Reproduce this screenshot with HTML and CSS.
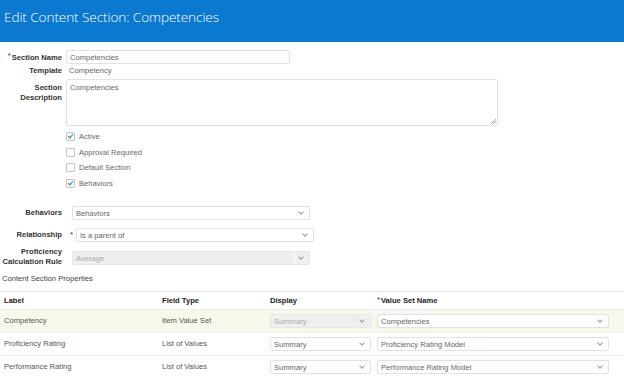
FILE: index.html
```html
<!DOCTYPE html>
<html lang="en">
<head>
  <meta charset="UTF-8">
  <title>Edit Content Section: Competencies</title>
  <link rel="stylesheet" href="styles.css">
</head>
<body>

<div class="header">
  <h1>Edit Content Section: Competencies</h1>
</div>

<!-- main form -->
<div class="form">
  <div class="lbl"><span class="req">*</span>Section Name</div>
  <div class="input name">Competencies</div>

  <div class="lbl tpl">Template</div>
  <div class="value">Competency</div>

  <div class="lbl desc">Section<br>Description</div>
  <div class="input area">Competencies<span class="grip"></span></div>

  <div></div>
  <div class="checks">
    <label class="check"><span class="box on"></span>Active</label>
    <label class="check"><span class="box"></span>Approval Required</label>
    <label class="check"><span class="box"></span>Default Section</label>
    <label class="check"><span class="box on"></span>Behaviors</label>
  </div>
</div>

<div class="form2">
  <div class="lbl">Behaviors</div>
  <div class="select wide">Behaviors<span class="arrow"></span></div>

  <div class="lbl">Relationship</div>
  <div class="reqrow"><span class="req dot">*</span><div class="select wide">Is a parent of<span class="arrow"></span></div></div>

  <div class="lbl two">Proficiency<br>Calculation Rule</div>
  <div class="select wide disabled">Average<span class="arrow"></span></div>
</div>

<div class="caption">Content Section Properties</div>

<table class="props">
  <thead>
    <tr>
      <th class="c1">Label</th>
      <th class="c2">Field Type</th>
      <th class="c3">Display</th>
      <th class="c4"><span class="req">*</span>Value Set Name</th>
    </tr>
  </thead>
  <tbody>
    <tr class="sel">
      <td>Competency</td>
      <td>Item Value Set</td>
      <td><div class="select disabled">Summary<span class="arrow"></span></div></td>
      <td><div class="select long">Competencies<span class="arrow"></span></div></td>
    </tr>
    <tr>
      <td>Proficiency Rating</td>
      <td>List of Values</td>
      <td><div class="select">Summary<span class="arrow"></span></div></td>
      <td><div class="select long">Proficiency Rating Model<span class="arrow"></span></div></td>
    </tr>
    <tr>
      <td>Performance Rating</td>
      <td>List of Values</td>
      <td><div class="select">Summary<span class="arrow"></span></div></td>
      <td><div class="select long">Performance Rating Model<span class="arrow"></span></div></td>
    </tr>
  </tbody>
</table>

</body>
</html>
```

FILE: styles.css
```css
body {
  margin: 0;
  font-family: "Liberation Sans", Arial, sans-serif;
  font-size: 7.6px;
  color: #333;
  background: #fff;
}
.header {
  background: #0b79d0;
  height: 42px;
  padding: 8px 4px 0;
  box-sizing: border-box;
}
.header h1 {
  margin: 0;
  font-family: "Open Sans", "Liberation Sans", sans-serif;
  font-weight: 300;
  font-size: 13.6px;
  color: #fff;
  line-height: 18px;
  letter-spacing: -0.1px;
}
.req {
  color: #0b79d0;
  font-weight: bold;
  position: relative;
  top: -2px;
  margin-right: 1px;
}
.lbl {
  font-weight: bold;
  text-align: right;
  color: #333;
  line-height: 9px;
}

/* top form */
.form {
  display: grid;
  grid-template-columns: 62px 1fr;
  column-gap: 4px;
  margin-top: 8px;
  align-items: start;
}
.form .lbl {
  padding-top: 3px;
}
.form .lbl.tpl {
  margin-top: 1px;
  padding-top: 1px;
}
.form .lbl.desc {
  margin-top: 4px;
  padding-top: 4px;
  line-height: 9.5px;
}
.input {
  border: 1px solid #e2e2e2;
  border-radius: 2px;
  color: #666;
  padding: 2px 3px;
  line-height: 9px;
  box-sizing: border-box;
}
.input.name {
  width: 224px;
  height: 14px;
}
.value {
  color: #666;
  margin-top: 1px;
  padding: 1px 3px 0;
  line-height: 9px;
}
.input.area {
  width: 432px;
  height: 47px;
  margin-top: 4px;
  position: relative;
  padding-top: 3px;
}
.grip {
  position: absolute;
  right: 1px;
  bottom: 1px;
  width: 5px;
  height: 5px;
  background: linear-gradient(135deg, transparent 45%, #aaa 45%, #aaa 55%, transparent 55%, transparent 70%, #aaa 70%, #aaa 80%, transparent 80%);
}
.checks {
  display: flex;
  flex-direction: column;
  gap: 6.5px;
  margin-top: 6px;
}
.check {
  display: flex;
  align-items: center;
  color: #666;
  line-height: 9px;
  gap: 4px;
}
.box {
  width: 7px;
  height: 7px;
  border: 1px solid #c4c4c4;
  border-radius: 1px;
  position: relative;
  background: #fff;
}
.box.on::after {
  content: "";
  position: absolute;
  left: 2px;
  top: 0px;
  width: 2px;
  height: 4px;
  border: solid #1a7fd6;
  border-width: 0 1.5px 1.5px 0;
  transform: rotate(40deg);
}

/* second form */
.form2 {
  display: grid;
  grid-template-columns: 62px 1fr;
  column-gap: 10px;
  row-gap: 8px;
  margin-top: 18px;
  align-items: center;
}
.form2 .lbl.two {
  line-height: 10px;
  margin-top: -3px;
}
.reqrow {
  display: flex;
  align-items: center;
}
.req.dot {
  width: 4px;
  margin-left: -2px;
  margin-right: 2px;
  top: 0;
}
.select {
  border: 1px solid #e2e2e2;
  border-radius: 2px;
  color: #666;
  padding: 2px 3px;
  line-height: 9px;
  height: 14px;
  box-sizing: border-box;
  position: relative;
  background: #fff;
}
.select.wide {
  width: 238px;
}
.select.disabled {
  background: #efefef;
  color: #aaa;
  border-color: #e6e6e6;
}
.arrow {
  position: absolute;
  right: 6px;
  top: 3px;
  width: 3px;
  height: 3px;
  border: solid #999;
  border-width: 0 1px 1px 0;
  transform: rotate(45deg);
}
.select.wide.disabled::after {
  content: "";
  position: absolute;
  right: 14px;
  top: 0;
  bottom: 0;
  border-left: 1px solid #fff;
}

.caption {
  margin: 7px 2px 8px;
  color: #444;
  line-height: 9px;
}

/* table */
.props {
  width: 100%;
  border-collapse: collapse;
  table-layout: fixed;
}
.props th {
  text-align: left;
  font-weight: bold;
  color: #222;
  height: 17px;
  border-top: 1px solid #e8e8e8;
  border-bottom: 1px solid #eee;
  padding: 0 4px;
}
.props td {
  height: 22px;
  padding: 0 4px;
  color: #555;
  border-bottom: 1px solid #f0f0f0;
}
.props tr.sel td {
  background: #f7f8ec;
}
.props .c1 { width: 150px; }
.props .c2 { width: 100px; }
.props .c3 { width: 99px; }
.props td .select {
  width: 101px;
}
.props td .select.long {
  width: 232px;
}
.props .c4 .req {
  top: -1px;
}
```
